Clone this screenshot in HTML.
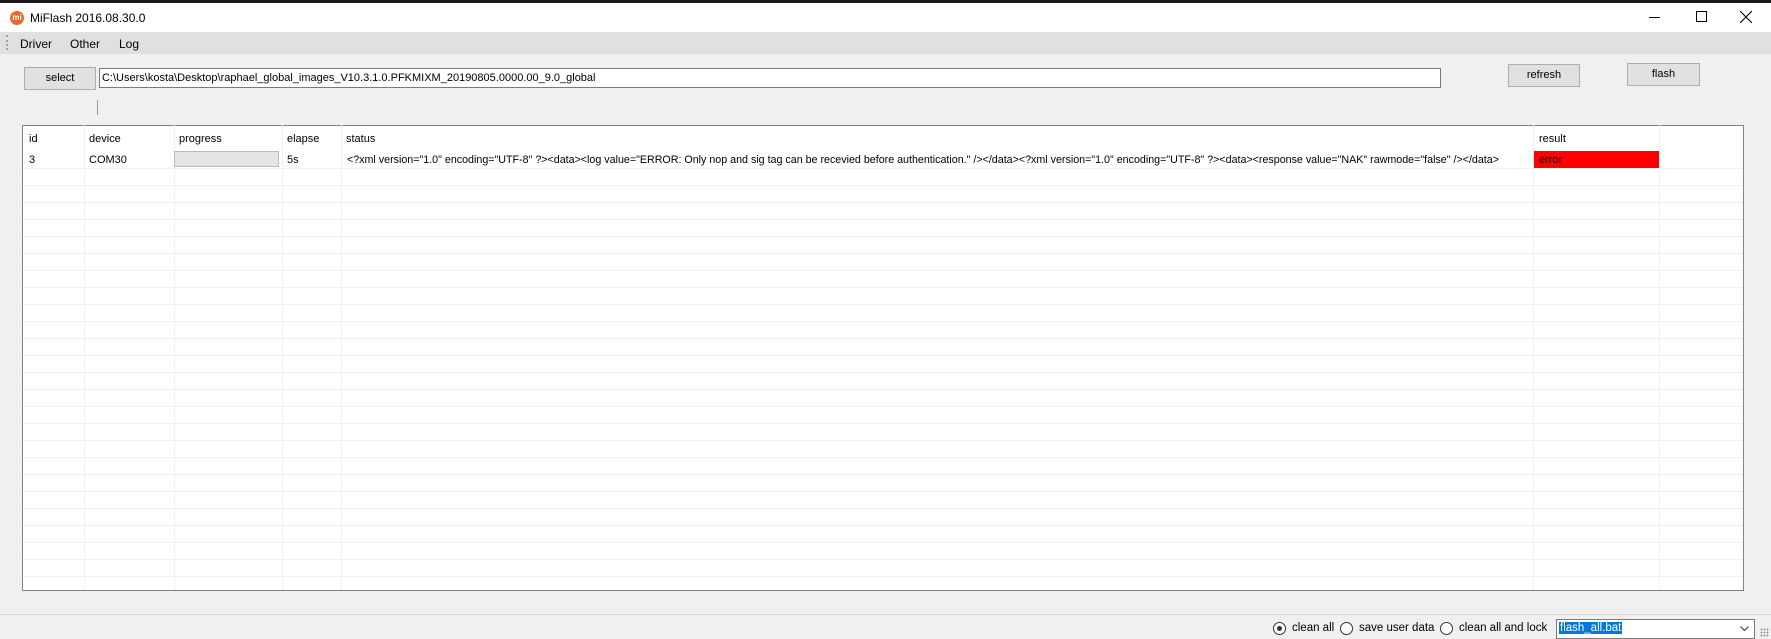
<!DOCTYPE html>
<html><head><meta charset="utf-8"><style>
*{margin:0;padding:0;box-sizing:border-box}
body{width:1771px;height:639px;overflow:hidden;background:#f0f0f0;font-family:"Liberation Sans",Arial,sans-serif;font-size:11px;color:#000;position:relative}
.a{position:absolute}
.btn{position:absolute;background:#e1e1e1;border:1px solid #adadad;text-align:center;font-size:11px}
.vl{position:absolute;top:125px;height:465px;width:1px;background:#f0f0f0}
.t{position:absolute;white-space:nowrap}
</style></head><body>
<div class="a" style="left:0;top:0;width:1771px;height:3px;background:#1a1a1a"></div>
<div class="a" style="left:0;top:3px;width:1771px;height:29px;background:#fff"></div>
<div class="a" style="left:10px;top:11px;width:14px;height:14px;border-radius:50%;background:#e8692a;color:#fff;font-size:8px;line-height:14px;text-align:center;font-weight:bold">mi</div>
<div class="t" style="left:30px;top:11px;font-size:12px">MiFlash 2016.08.30.0</div>
<div class="a" style="left:1649px;top:17px;width:11px;height:1px;background:#000"></div>
<div class="a" style="left:1696px;top:11px;width:11px;height:11px;border:1px solid #000"></div>
<svg class="a" style="left:1740px;top:11px" width="12" height="12"><path d="M0 0L12 12M12 0L0 12" stroke="#000" stroke-width="1.1"/></svg>
<div class="a" style="left:0;top:32px;width:1771px;height:22px;background:#e0e0e0"></div>
<div class="a" style="left:6px;top:35px;width:2px;height:15px;border-left:2px dotted #a0a0a0"></div>
<div class="t" style="left:20px;top:37px;font-size:12px">Driver</div>
<div class="t" style="left:70px;top:37px;font-size:12px">Other</div>
<div class="t" style="left:119px;top:37px;font-size:12px">Log</div>
<div class="btn" style="left:24px;top:67px;width:72px;height:23px;line-height:21px">select</div>
<div class="a" style="left:99px;top:68px;width:1342px;height:20px;background:#fff;border:1px solid #7a7a7a;padding-left:2px;line-height:18px;font-size:11px;white-space:nowrap">C:\Users\kosta\Desktop\raphael_global_images_V10.3.1.0.PFKMIXM_20190805.0000.00_9.0_global</div>
<div class="btn" style="left:1508px;top:64px;width:72px;height:23px;line-height:21px">refresh</div>
<div class="btn" style="left:1627px;top:63px;width:73px;height:23px;line-height:21px">flash</div>
<div class="a" style="left:97px;top:100px;width:1px;height:15px;background:#999"></div>
<div class="a" style="left:22px;top:125px;width:1722px;height:466px;background:#fff;border:1px solid #828282;overflow:hidden">
 <div class="a" style="left:0;top:42px;width:1720px;height:424px;background:repeating-linear-gradient(to bottom,#f0f0f0 0,#f0f0f0 1px,transparent 1px,transparent 17px)"></div>
</div>
<div class="vl" style="left:84px"></div><div class="vl" style="left:174px"></div><div class="vl" style="left:282px"></div><div class="vl" style="left:341px"></div><div class="vl" style="left:1533px"></div><div class="vl" style="left:1659px"></div>
<div class="t" style="left:29px;top:133px">id</div>
<div class="t" style="left:89px;top:133px">device</div>
<div class="t" style="left:179px;top:133px">progress</div>
<div class="t" style="left:287px;top:133px">elapse</div>
<div class="t" style="left:346px;top:133px">status</div>
<div class="t" style="left:1539px;top:133px">result</div>
<div class="t" style="left:29px;top:154px">3</div>
<div class="t" style="left:89px;top:154px">COM30</div>
<div class="a" style="left:174px;top:151px;width:105px;height:16px;background:#e6e6e6;border:1px solid #bcbcbc"></div>
<div class="t" style="left:287px;top:154px">5s</div>
<div class="t" style="left:347px;top:154px;font-size:10.7px">&lt;?xml version="1.0" encoding="UTF-8" ?&gt;&lt;data&gt;&lt;log value="ERROR: Only nop and sig tag can be recevied before authentication." /&gt;&lt;/data&gt;&lt;?xml version="1.0" encoding="UTF-8" ?&gt;&lt;data&gt;&lt;response value="NAK" rawmode="false" /&gt;&lt;/data&gt;</div>
<div class="a" style="left:1534px;top:151px;width:125px;height:17px;background:#f00"></div>
<div class="t" style="left:1539px;top:154px">error</div>
<div class="a" style="left:0;top:614px;width:1771px;height:1px;background:#d7d7d7"></div>
<div class="a" style="left:1273px;top:622px;width:13px;height:13px;border:1px solid #333;border-radius:50%;background:#fff"><div class="a" style="left:3px;top:3px;width:5px;height:5px;border-radius:50%;background:#333"></div></div>
<div class="t" style="left:1292px;top:622px;font-size:11.5px">clean all</div>
<div class="a" style="left:1340px;top:622px;width:13px;height:13px;border:1px solid #333;border-radius:50%;background:#fff"></div>
<div class="t" style="left:1359px;top:622px;font-size:11.5px">save user data</div>
<div class="a" style="left:1440px;top:622px;width:13px;height:13px;border:1px solid #333;border-radius:50%;background:#fff"></div>
<div class="t" style="left:1459px;top:622px;font-size:11.5px">clean all and lock</div>
<div class="a" style="left:1556px;top:619px;width:199px;height:20px;background:#fff;border:1px solid #7a7a7a"></div>
<div class="t" style="left:1559px;top:622px;background:#0078d7;color:#fff;padding:0 1px;font-size:11.5px">flash_all.bat</div>
<svg class="a" style="left:1740px;top:626px" width="9" height="6"><path d="M0.5 0.5L4.5 4.5L8.5 0.5" stroke="#333" fill="none"/></svg>
<div class="a" style="left:1760px;top:628px;width:9px;height:9px;background:radial-gradient(circle,#999 0.8px,transparent 1px) 0 0/3px 3px"></div>
</body></html>
